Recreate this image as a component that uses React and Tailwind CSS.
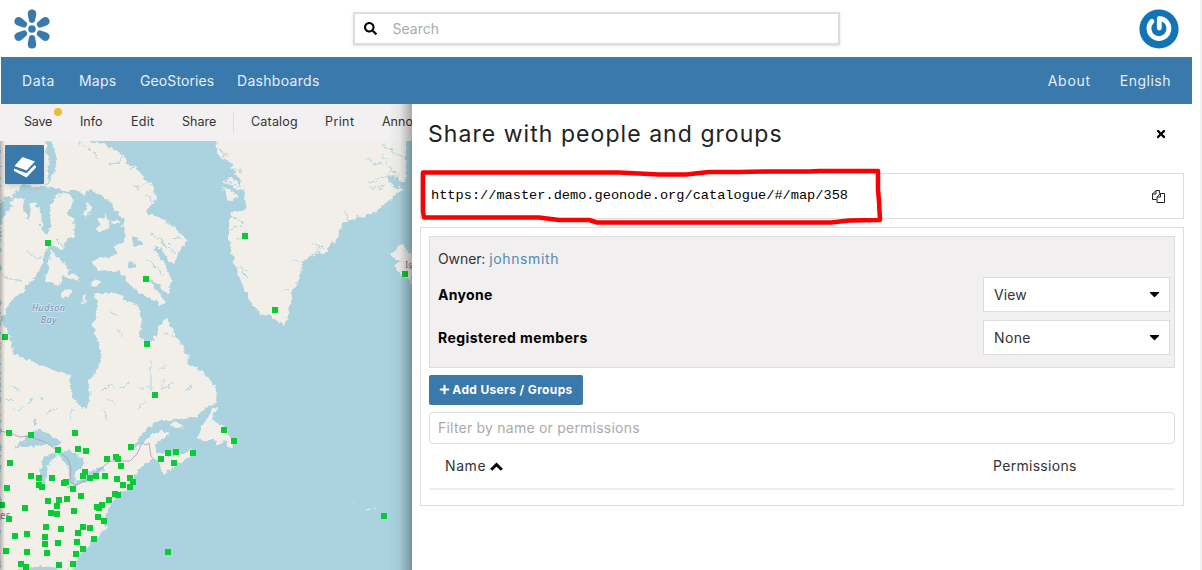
import React from "react";
import { FaSearch, FaTimes, FaPlus, FaCaretDown } from "react-icons/fa";

const markers = [
  [48, 243], [146, 279], [147, 344], [5, 337], [245, 236], [275, 310], [405, 274], [384, 516], [224, 430], [234, 441], [168, 552],
  [155, 395], [9, 433], [31, 435], [75, 433], [58, 450], [78, 449], [86, 451], [10, 463], [131, 447], [107, 459], [116, 457], [118, 459],
  [121, 466], [161, 459], [168, 453], [176, 452], [193, 453], [174, 463], [31, 476], [39, 478], [52, 478], [39, 485], [42, 487], [64, 483],
  [66, 482], [85, 472], [83, 476], [90, 478], [96, 476], [105, 476], [117, 479], [130, 478], [133, 482], [123, 485], [130, 487], [73, 489],
  [7, 488], [81, 496], [115, 494], [118, 495], [109, 500], [48, 501], [59, 500], [67, 499], [57, 506], [97, 507], [102, 505], [99, 508],
  [25, 508], [51, 513], [57, 514], [74, 511], [2, 505], [9, 519], [98, 517], [104, 521], [46, 527], [61, 529], [83, 527], [90, 528],
  [15, 536], [27, 534], [45, 537], [78, 533], [45, 544], [58, 543], [77, 542], [94, 539], [83, 549], [6, 551], [27, 552], [47, 553],
  [76, 554], [21, 564], [26, 567], [59, 565], [73, 564],
];

const land = [
  "M0 138H47L46 150L50 160L48 170L46 186L34 186L24 184L17 190L12 198L6 196L0 202Z",
  "M8 203L14 198L22 197L24 201L14 207Z",
  "M80 138L95 143L104 142L112 150L124 155L128 164L136 166L142 176L150 182L154 190L156 201L150 207L145 212L158 217L168 223L180 232L187 241L182 246L178 254L174 264L168 259L162 249L153 247L160 257L166 266L171 280L168 294L160 287L150 279L144 275L152 286L166 301L161 305L147 297L137 291L127 281L120 273L110 270L97 271L93 263L96 258L109 259L118 253L114 248L122 242L127 236L122 228L124 220L119 216L111 203L101 196L91 190L84 195L75 190L64 190L55 188L46 186L52 177L57 168L52 158L47 138Z",
  "M99 220L106 215L110 221L109 229L102 233L98 229Z",
  "M112 220L118 219L119 224L113 224Z",
  "M0 223L8 209L22 199L25 213L30 219L30 203L36 202L40 212L41 226L46 236L52 225L50 208L55 196L65 192L74 199L69 212L75 226L74 236L67 240L62 251L57 247L50 244L45 252L43 260L38 273L27 285L22 293L13 298L8 306L4 315L0 321Z",
  "M51 249L56 257L65 263L70 273L79 277L78 282L68 278L63 277L59 287L53 282L45 282L48 268Z",
  "M61 295L65 288L72 291L67 298Z",
  "M82 298L84 295L86 300L84 305Z",
  "M90 284L96 279L102 281L95 287Z",
  "M87 218L89 212L92 205L87 203L85 213Z",
  "M0 322L5 327L11 341L13 352L22 358L39 364L57 371L69 374L71 392L76 401L84 410L90 399L88 381L94 372L101 361L100 347L95 333L92 326L96 315L97 304L94 293L105 293L119 293L127 301L139 307L141 320L139 334L145 343L153 341L159 327L167 317L174 332L180 343L189 355L187 363L197 368L208 377L217 390L216 403L207 407L196 418L174 420L158 420L144 431L136 442L128 451L136 448L150 436L163 429L169 434L160 441L155 447L158 453L167 456L176 457L186 451L193 449L190 457L178 465L165 473L159 469L162 462L154 459L144 463L135 475L130 487L119 493L112 502L108 510L104 519L106 528L97 538L84 549L77 560L75 571H59L54 566L31 568L28 571H0Z",
  "M171 424L178 422L184 427L175 428Z",
  "M205 421L213 408L218 407L212 421L222 425L229 435L234 444L230 449L225 440L217 446L214 440L199 440L200 431Z",
  "M216 141L219 160L227 159L234 170L239 178L244 191L246 205L242 212L232 211L229 225L229 241L233 256L238 274L243 287L250 302L260 314L271 316L284 326L288 316L291 300L294 287L300 277L301 263L310 256L325 252L338 237L342 223L356 218L374 213L392 198L404 189L392 187L386 174L394 177L406 182V138H216Z",
  "M222 180L232 178L244 188L238 191Z",
  "M222 187L232 190L239 198L228 202Z",
  "M391 255L401 244L407 251L412 254V284L403 276L394 266L401 262Z",
];

const lakes = [
  "M16 448L26 436L39 430L51 435L62 442L55 447L42 444L30 448Z",
  "M44 457L52 453L58 455L50 462L46 474L45 486L38 484L40 466Z",
  "M57 453L70 450L84 459L82 467L76 470L73 484L69 483L70 470L63 460Z",
  "M66 487L79 480L89 476L85 482L70 489Z",
  "M87 472L103 467L105 470L94 475Z",
  "M33 420L36 418L38 423L35 425Z",
  "M50 138L54 148L57 160L52 172L49 160L46 148Z",
  "M131 236L138 238L142 245L134 246Z",
  "M128 261L134 262L135 268L128 267Z",
  "M76 141L80 141L80 146Z",
];

const pale = [
  "M83 361L86 358L90 363L85 366L82 362",
  "M101 391L109 385L115 388M119 388L132 382M109 400L116 405M139 389L149 386M151 360V390",
  "M12 386L20 390M27 403L33 400M13 410L24 408M158 369L166 366",
  "M164 380L161 390L168 386L174 382M185 390L196 385M145 401L137 408",
  "M5 399L12 400M38 395L42 400M46 412L57 408M72 410L69 420M103 410L107 420",
  "M40 147L48 153M82 145L91 151L99 158M124 154L118 163L110 164M137 165L128 170M151 181L139 188L132 184M156 201L145 196",
  "M184 240L177 237L170 244M176 254L165 246L159 237L151 235M164 275L154 266L145 257",
  "M26 251L40 259M2 276L12 280L22 282M56 239L64 247L69 255M110 311L119 317M118 329L122 336M162 332L174 336",
  "M215 147L228 155M219 162L225 153M231 167L242 172M225 180L239 188M246 194L232 193M230 216L240 220L243 225M229 230L242 225L246 220M236 241L247 232M238 267L248 270",
  "M242 272L248 278M289 290L281 292M303 265L292 259M317 255L320 246M324 247L313 244M349 219L344 211M366 158L374 163L383 165M369 183L384 177L394 176",
  "M370 188L385 187M382 144L392 151L406 159M381 152L391 168L388 183M400 177L386 165",
];

function CoastMap() {
  return (
    <svg viewBox="0 141 412 429" className="block h-[429px] w-[412px] bg-[#aad3df]">
      <defs>
        <filter id="coast" x="-2%" y="-2%" width="104%" height="104%">
          <feTurbulence type="fractalNoise" baseFrequency="0.18" numOctaves="3" seed="4" />
          <feDisplacementMap in="SourceGraphic" scale="7" xChannelSelector="R" yChannelSelector="G" />
        </filter>
      </defs>
      <g filter="url(#coast)">
        {land.map((d) => <path key={d} d={d} fill="#f2efe9" />)}
        {pale.map((d) => <path key={d} d={d} fill="none" stroke="#aad3df" strokeWidth="1" />)}
        {lakes.map((d) => <path key={d} d={d} fill="#aad3df" />)}
      </g>
      <path d="M0 431L10 433L20 437L28 436L45 442L60 452L68 459L71 468L70 482L76 485L90 478L99 470L110 461H130L137 454L142 443L146 445L149 443L151 456L155 461" fill="none" stroke="#ae9cba" strokeWidth="1" opacity="0.85" />
      <g fontFamily="'Noto Sans', sans-serif" fontSize="9" fontStyle="italic" fill="#7189b8" stroke="#d5e4ee" strokeWidth="1.5" paintOrder="stroke" textAnchor="middle">
        <text x="48.500" y="311" textLength="33">Hudson</text>
        <text x="48.500" y="323" textLength="16">Bay</text>
      </g>
      <g fontFamily="'Noto Sans', sans-serif" fontSize="10" fill="#8b6e92">
        <text x="0" y="519">es</text>
        <text x="405" y="268" fontFamily="'Liberation Serif', serif" fontSize="10">Is</text>
      </g>
      <path d="M366 510L371 509M374 508L376 509M353 503H354" stroke="#e6ecea" />
      {markers.map(([x, y], i) => <rect key={i} x={x - 3} y={y - 3} width="6" height="6" fill="#08cb35" />)}
    </svg>
  );
}

function Logo() {
  return (
    <svg viewBox="0 0 38 40" className="h-10 w-[38px]" fill="#3a79ab">
      <circle cx="19" cy="20" r="3.800" />
      {[0, 60, 120, 180, 240, 300].map((a) => (
        <path key={a} transform={`rotate(${a} 19 20)`} d="M14.700 5C14.700 2 16.300.400 19 .400S23.300 2 23.300 5L22 11.800C21.500 14.600 16.500 14.600 16 11.800Z" />
      ))}
    </svg>
  );
}

function Avatar() {
  return (
    <svg viewBox="0 0 40 40" className="size-10">
      <circle cx="20" cy="20" r="19.600" fill="#1274b5" />
      <path d="M13 12.300A10 10 0 1 0 20.300 9.500V19" fill="none" stroke="#fff" strokeWidth="4.800" strokeLinecap="round" strokeLinejoin="round" />
    </svg>
  );
}

function CopyIcon() {
  return (
    <svg viewBox="0 0 13 13" className="size-[13px]" fill="none" stroke="#222" strokeWidth="1">
      <path d="M4.500 9.500H.500V4L4 .500H7.500V3.500M4 .500V4H.500" />
      <path d="M12.500 3.500H8.500L5 7V12.500H12.500ZM8.500 3.500V7H5" />
    </svg>
  );
}

function Select({ value }) {
  return (
    <div className="flex h-[35px] w-[187px] items-center justify-between border border-[#ddd] bg-white pr-[6px] pb-px pl-[10px] text-[14px] text-[#333]">
      <span className={value === "View" ? "tracking-[0.1px]" : "tracking-[0.35px]"}>{value}</span>
      <FaCaretDown className="h-[16px] w-[17px] text-black" />
    </div>
  );
}

export default function App() {
  return (
    <div className="flex h-[570px] w-[1202px] flex-col overflow-hidden border-r-2 border-[#f1f1f1] bg-white font-['Inter','Open_Sans',sans-serif]">
      <header className="flex h-[57px] shrink-0 items-center justify-between pr-[21px] pl-[13px]">
        <Logo />
        <div className="ml-[2px] flex h-[33px] w-[487px] items-center border-2 border-[#ddd] pl-[9px] shadow-sm">
          <FaSearch className="size-[13px] text-black" />
          <span className="ml-[16px] text-[14px] text-[#aaa]">Search</span>
        </div>
        <Avatar />
      </header>
      <nav className="ml-px flex h-[47px] w-[1191px] shrink-0 items-center justify-between bg-[#3a79ab] px-[21px] text-[14px] text-[#e6eef5]">
        <div className="flex">
          <span className="w-[57px] tracking-[0.6px]">Data</span>
          <span className="w-[61px] tracking-[0.2px]">Maps</span>
          <span className="w-[97px] tracking-[0.1px]">GeoStories</span>
          <span className="tracking-[0.3px]">Dashboards</span>
        </div>
        <div className="flex">
          <span className="w-[72px] tracking-[0.7px]">About</span>
          <span className="tracking-[0.5px]">English</span>
        </div>
      </nav>
      <main className="flex h-[466px] shrink-0">
        <section className="relative w-[412px] shrink-0 overflow-hidden">
          <div className="flex h-[37px] items-center overflow-hidden bg-[#f2f0f1] pl-[24px] text-[12.500px] whitespace-nowrap text-[#333]">
            <span className="w-[56px] shrink-0 tracking-[-0.2px]">Save</span>
            <span className="w-[51px] shrink-0">Info</span>
            <span className="w-[51px] shrink-0 tracking-[0.3px]">Edit</span>
            <span className="w-[51px] shrink-0">Share</span>
            <span className="mr-[17px] h-5 w-px shrink-0 bg-[#ddd]" />
            <span className="w-[74px] shrink-0 tracking-[0.2px]">Catalog</span>
            <span className="w-[57px] shrink-0 tracking-[0.4px]">Print</span>
            <span className="shrink-0">Anno</span>
          </div>
          <CoastMap />
          <span className="absolute top-[4px] left-[54px] size-[8px] rounded-full bg-[#ebbc35]" />
          <button className="absolute top-[41px] left-[5px] flex size-[39px] items-center justify-center rounded-[1px] bg-[#3a79ab] shadow-md">
            <svg viewBox="0 0 22 21" className="mt-[5px] h-[21px] w-[22px]" fill="#fff">
              <path d="M8.500 0L21 4.500L12.500 13.500L.500 9Z" />
              <path d="M0 11.500L12.500 16.300L20.500 8L22 9.500V10.500L12.500 20.500L0 14Z" />
            </svg>
          </button>
          <div className="absolute inset-y-0 right-0 w-[24px] bg-linear-to-r from-transparent via-black/5 to-black/30" />
          <div className="absolute top-[37px] bottom-0 left-0 w-[5px] bg-linear-to-r from-black/25 to-transparent" />
        </section>
        <section className="relative w-[788px] bg-white pr-[16px] pl-[8px]">
          <div className="flex h-[69px] items-center justify-between pr-[17px] pb-[9px] pl-[8px]">
            <h1 className="text-[23px] font-normal tracking-[1.050px] text-[#222]">Share with people and groups</h1>
            <FaTimes className="size-[12px] text-black" />
          </div>
          <div className="flex h-[46px] items-center justify-between border border-[#ddd] pr-[18px] pl-[10px]">
            <span className="font-['Liberation_Mono',monospace] text-[13.640px] text-black">https://master.demo.geonode.org/catalogue/#/map/358</span>
            <CopyIcon />
          </div>
          <div className="mt-[8px] h-[279px] border border-[#ddd] p-[8px]">
            <div className="h-[132px] border border-[#ddd] bg-[#f1eff0] pr-[4px] pl-[8px] text-[14px]">
              <div className="flex h-[40px] items-center pt-[2px] text-[#333]">
                <span className="tracking-[-0.1px]">Owner: <span className="tracking-[0.650px] text-[#5089b6]">johnsmith</span></span>
              </div>
              <div className="flex items-center justify-between font-bold">
                <span className="pb-px tracking-[0.300px]">Anyone</span>
                <div className="font-normal"><Select value="View" /></div>
              </div>
              <div className="mt-[8px] flex items-center justify-between font-bold">
                <span className="pb-px tracking-[0.450px]">Registered members</span>
                <div className="font-normal"><Select value="None" /></div>
              </div>
            </div>
            <button className="mt-[7px] flex h-[30px] w-[154px] items-center justify-center gap-[2px] rounded-[2px] bg-[#3a79ab] pb-px text-[12px] font-bold whitespace-nowrap text-white">
              <FaPlus className="size-[11px]" />
              <span className="tracking-[0.350px]">Add Users / Groups</span>
            </button>
            <div className="mt-[7px] flex h-[32px] items-center rounded-[4px] border border-[#ddd] pb-px pl-[8px] text-[14px] text-[#aaa]">
              <span className="tracking-[0.220px]">Filter by name or permissions</span>
            </div>
            <div className="flex h-[46px] items-center border-b-2 border-[#eee] pb-[2px] text-[14px] text-[#333]">
              <div className="flex w-[564px] items-center gap-[4px] pl-[16px]">
                <span className="tracking-[0.600px]">Name</span>
                <svg viewBox="0 0 13 9" className="mt-[2px] h-[9px] w-[13px]" fill="none" stroke="#000" strokeWidth="3">
                  <path d="M1.200 7.800L6.500 2.500L11.800 7.800" />
                </svg>
              </div>
              <span className="tracking-[0.300px]">Permissions</span>
            </div>
          </div>
          <svg viewBox="0 0 468 60" className="pointer-events-none absolute top-[62px] left-[7px] h-[60px] w-[468px]" fill="none" stroke="#fa0000" strokeWidth="4.500" strokeLinejoin="round" strokeLinecap="round">
            <path d="M4 6.500H128L200 6.500L240 8.500H267L290 6H320L345 5.500H390L400 5L459 5L459 24L460 35L461 54L430 54.500L412 56.500L320 56.500L178 56.500L170 54L140 54L120 51.500H5L4 45Z" />
          </svg>
        </section>
      </main>
    </div>
  );
}
